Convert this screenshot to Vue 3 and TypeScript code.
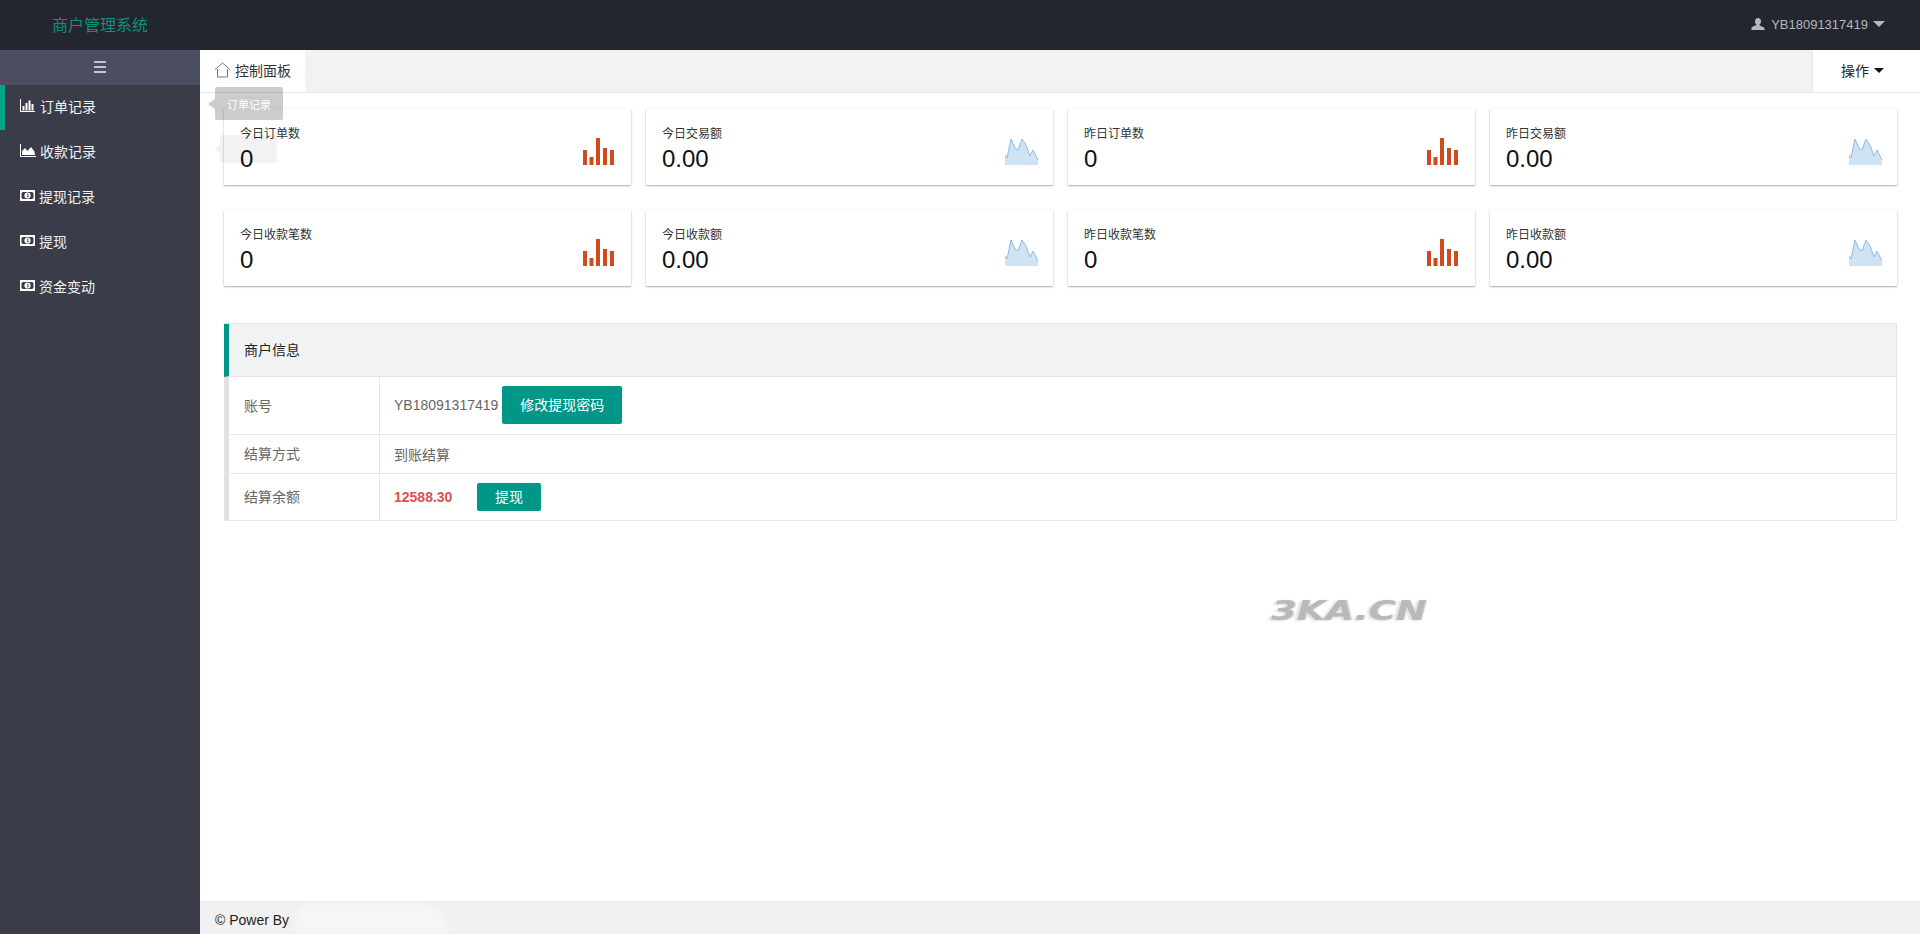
<script setup lang="ts">
const navItems = [
  { label: '订单记录', icon: 'bar', active: true },
  { label: '收款记录', icon: 'area', active: false },
  { label: '提现记录', icon: 'money', active: false },
  { label: '提现', icon: 'money', active: false },
  { label: '资金变动', icon: 'money', active: false },
]
const cards = [
  { title: '今日订单数', value: '0', chart: 'bar' },
  { title: '今日交易额', value: '0.00', chart: 'area' },
  { title: '昨日订单数', value: '0', chart: 'bar' },
  { title: '昨日交易额', value: '0.00', chart: 'area' },
  { title: '今日收款笔数', value: '0', chart: 'bar' },
  { title: '今日收款额', value: '0.00', chart: 'area' },
  { title: '昨日收款笔数', value: '0', chart: 'bar' },
  { title: '昨日收款额', value: '0.00', chart: 'area' },
]
</script>

<template>
  <div class="app">
    <header class="topbar">
      <div class="brand">商户管理系统</div>
      <div class="user">
        <svg class="user-icon" viewBox="0 0 14 14" width="14" height="14">
          <path d="M7 1c1.900 0 3 1.500 3 3.400 0 1.300-.6 2.500-1.400 3.100v1.100l4 1.700c.6.3.9.8.9 1.400V13H.5v-1.800c0-.6.3-1.100.9-1.400l4-1.700V7.500C4.600 6.900 4 5.700 4 4.400 4 2.500 5.100 1 7 1z" fill="#b4b7bd" />
        </svg>
        <span>YB18091317419</span>
        <i class="caret caret-user"></i>
      </div>
    </header>

    <div class="body">
      <aside class="sidebar">
        <div class="toggle">
          <span class="hamburger"><i></i><i></i><i></i></span>
        </div>
        <nav class="nav">
          <a v-for="item in navItems" :key="item.label" class="nav-item" :class="{ active: item.active }">
            <svg v-if="item.icon === 'bar'" class="nav-icon" viewBox="0 0 15 13" width="15" height="13">
              <path d="M0 0h1v12h14v1H0z" fill="#fff" />
              <path d="M2.500 7h2v4.500h-2zM5.500 4h2v7.500h-2zM8.500 1.500h2v10h-2zM11.500 5h2v6.500h-2z" fill="#fff" />
            </svg>
            <svg v-else-if="item.icon === 'area'" class="nav-icon nav-icon-area" viewBox="0 0 16 13" width="16" height="13">
              <path d="M0 0h1v12h15v1H0z" fill="#fff" />
              <path d="M2 11V7l3-3 2.500 3L11 3l3.500 4.500.5 3.500z" fill="#fff" />
            </svg>
            <svg v-else class="nav-icon" viewBox="0 0 15 11" width="15" height="11">
              <path fill-rule="evenodd" d="M0 0h15v11H0zM2.700 2 1.500 3.200v4.600L2.700 9h9.600l1.200-1.200V3.200L12.300 2zM7.500 2.400a3.100 3.100 0 1 1 0 6.200 3.100 3.100 0 0 1 0-6.200zM7 3.800v.7h.5v2H6.800v.7h1.700v-.7h-.1V3.800z" fill="#fff" />
            </svg>
            <span :class="{ 'nav-tight': item.icon === 'money' }">{{ item.label }}</span>
          </a>
        </nav>
      </aside>

      <main class="main">
        <div class="tabbar">
          <div class="tab">
            <svg viewBox="0 0 17 16" width="17" height="16">
              <path d="M1 7.500 8.500 1 16 7.500M3.500 7v8h10V7" fill="none" stroke="#777" stroke-width="1" />
            </svg>
            <span>控制面板</span>
          </div>
          <div class="actions">操作 <i class="caret caret-action"></i></div>
        </div>

        <div class="content">
          <section class="cards">
            <article v-for="card in cards" :key="card.title" class="card">
              <div class="card-text">
                <div class="card-title">{{ card.title }}</div>
                <div class="card-value">{{ card.value }}</div>
              </div>
              <svg v-if="card.chart === 'bar'" class="spark" viewBox="0 0 32 27" width="32" height="27">
                <path d="M0 12h4v15H0zM6.500 19h4v8h-4zM13 0h4v27h-4zM20 10h4v17h-4zM27 12h4v15h-4z" fill="#d1491f" />
              </svg>
              <svg v-else class="spark spark-area" viewBox="0 0 33 27" width="33" height="27">
                <path d="M0 17 2 20 6 1 10 10 13 12 17 1 21 7 25 18 28 12 33 22V27H0z" fill="#cfe3f5" />
                <path d="M0 17 2 20 6 1 10 10 13 12 17 1 21 7 25 18 28 12 33 22" fill="none" stroke="#8dbbe2" stroke-width="1" />
              </svg>
            </article>
          </section>

          <section class="panel">
            <h2 class="panel-heading">商户信息</h2>
            <div class="row row-account">
              <div class="label">账号</div>
              <div class="value">
                <span>YB18091317419</span>
                <button class="btn btn-pass">修改提现密码</button>
              </div>
            </div>
            <div class="row row-method">
              <div class="label">结算方式</div>
              <div class="value">到账结算</div>
            </div>
            <div class="row row-balance">
              <div class="label">结算余额</div>
              <div class="value">
                <b class="money">12588.30</b>
                <button class="btn btn-withdraw">提现</button>
              </div>
            </div>
          </section>
        </div>

        <footer class="footer">© Power By</footer>
      </main>
    </div>

    <div class="tip tip-main">订单记录</div>
    <div class="tip tip-ghost"></div>
    <div class="watermark">3KA.CN</div>
    <div class="footer-blot"></div>
  </div>
</template>

<style>
html, body { margin: 0; height: 100%; overflow: hidden; background: #fff; }
</style>

<style scoped>
.app {
  position: relative;
  display: flex;
  flex-direction: column;
  height: 934px;
  font-family: "Liberation Sans", "Noto Sans CJK SC", sans-serif;
  font-size: 14px;
  color: #333;
}
.topbar {
  flex: 0 0 50px;
  display: flex;
  align-items: center;
  justify-content: space-between;
  background: #23262f;
}
.brand {
  width: 200px;
  padding-bottom: 3px;
  text-align: center;
  font-size: 16px;
  color: #0f8f7c;
}
.user {
  display: flex;
  align-items: center;
  padding-right: 35px;
  padding-bottom: 2px;
  font-size: 13px;
  color: #b4b7bd;
}
.user-icon { margin-right: 6px; }
.caret {
  display: inline-block;
  width: 0;
  height: 0;
  border-left: 6px solid transparent;
  border-right: 6px solid transparent;
}
.caret-user { margin-left: 5px; border-top: 6px solid #b4b7bd; }
.caret-action {
  margin-left: 2px;
  border-left-width: 5px;
  border-right-width: 5px;
  border-top: 5px solid #111;
}
.body { flex: 1; display: flex; min-height: 0; }
.sidebar {
  flex: 0 0 200px;
  background: #3a3d49;
}
.toggle {
  height: 35px;
  display: flex;
  align-items: center;
  justify-content: center;
  background: #4a4e60;
}
.hamburger { display: flex; flex-direction: column; gap: 3px; width: 12px; padding-bottom: 1px; }
.hamburger i { height: 2px; background: #c3c5cc; }
.nav { display: flex; flex-direction: column; }
.nav-item {
  height: 45px;
  display: flex;
  align-items: center;
  gap: 5px;
  padding-left: 20px;
  padding-bottom: 4px;
  color: #f2f2f4;
  font-size: 14px;
  box-sizing: border-box;
}
.nav-item.active {
  box-shadow: inset 5px 0 0 #00a58c;
}
.nav-icon { flex: none; }
.nav-icon-area { margin-right: -1px; }
.nav-tight { margin-left: -1px; }
.main {
  flex: 1;
  min-width: 0;
  display: flex;
  flex-direction: column;
}
.tabbar {
  flex: 0 0 42px;
  display: flex;
  justify-content: space-between;
  background: #f2f2f2;
  border-bottom: 1px solid #e6e6e6;
  box-sizing: border-box;
}
.tab {
  width: 105px;
  height: 42px;
  display: flex;
  align-items: center;
  gap: 4px;
  padding-left: 14px;
  padding-bottom: 2px;
  box-sizing: border-box;
  background: #fff;
  color: #333;
  font-size: 14px;
}
.actions {
  width: 108px;
  display: flex;
  align-items: center;
  gap: 3px;
  padding-left: 28px;
  padding-bottom: 2px;
  background: #fff;
  border-left: 1px solid #e6e6e6;
  box-sizing: border-box;
  font-size: 14px;
  color: #222;
}
.content {
  flex: 1;
  padding: 16px 23px 0 24px;
}
.cards {
  display: grid;
  grid-template-columns: repeat(4, 1fr);
  gap: 25px 15px;
}
.card {
  height: 76px;
  display: flex;
  justify-content: space-between;
  align-items: flex-end;
  padding: 0 16px 21px 16px;
  box-sizing: border-box;
  background: #fff;
  box-shadow: 0 1px 2px rgba(0, 0, 0, .32), 0 0 3px rgba(0, 0, 0, .05);
  border-radius: 1px;
}
.card-text {
  align-self: flex-start;
  padding-top: 17px;
}
.card-title { font-size: 12px; line-height: 17px; color: #333; }
.card-value { font-size: 24px; line-height: 32px; color: #111; }
.spark { display: block; margin-bottom: -1px; }
.spark-area { margin-right: -1px; }
.panel {
  margin-top: 37px;
  border: 1px solid #e6e6e6;
  border-left: 0;
}
.panel-heading {
  margin: 0;
  height: 53px;
  display: flex;
  align-items: center;
  padding-left: 15px;
  padding-bottom: 2px;
  box-sizing: border-box;
  background: #f2f2f2;
  border-left: 5px solid #009688;
  border-bottom: 1px solid #e2e2e2;
  font-size: 14px;
  font-weight: 400;
  color: #222;
}
.row {
  display: flex;
  border-left: 5px solid #e2e2e2;
  box-sizing: border-box;
  color: #666;
  font-size: 14px;
}
.row + .row { border-top: 1px solid #e6e6e6; }
.row-account { height: 57px; }
.row-method { height: 39px; }
.row-balance { height: 47px; }
.label {
  flex: 0 0 151px;
  display: flex;
  align-items: center;
  padding-left: 15px;
  padding-bottom: 2px;
  box-sizing: border-box;
  border-right: 1px solid #e6e6e6;
}
.value {
  flex: 1;
  display: flex;
  align-items: center;
  padding-left: 14px;
  padding-bottom: 1px;
}
.btn {
  border: 0;
  border-radius: 2px;
  background: #009688;
  color: #fff;
  font-family: inherit;
  font-size: 14px;
  padding: 0 0 2px;
}
.btn-pass { width: 120px; height: 38px; margin-left: 4px; }
.btn-withdraw { width: 64px; height: 28px; margin-left: 25px; }
.money { width: 58px; color: #d9534f; font-size: 14px; font-weight: 700; white-space: nowrap; }
.footer {
  flex: 0 0 33px;
  display: flex;
  align-items: center;
  padding-left: 15px;
  padding-top: 3px;
  background: #f1f1f1;
  border-top: 1px solid #e6e6e6;
  box-sizing: border-box;
  font-size: 14px;
  color: #222;
}
.tip {
  position: absolute;
  color: #fff;
  border-radius: 2px;
  display: flex;
  align-items: center;
  justify-content: center;
  font-size: 11px;
}
.tip::before {
  content: "";
  position: absolute;
  right: 100%;
  top: 50%;
  margin-top: -5px;
  border-top: 5px solid transparent;
  border-bottom: 5px solid transparent;
}
.tip-main {
  left: 215px;
  top: 87px;
  width: 68px;
  height: 33px;
  background: rgba(0, 0, 0, .2);
}
.tip-main::before { border-right: 7px solid rgba(0, 0, 0, .2); }
.tip-ghost {
  left: 220px;
  top: 135px;
  width: 57px;
  height: 28px;
  background: rgba(0, 0, 0, .05);
}
.tip-ghost::before { border-right: 5px solid rgba(0, 0, 0, .05); }
.watermark {
  position: absolute;
  left: 1271px;
  top: 593px;
  font-family: "DejaVu Sans", sans-serif;
  font-size: 26px;
  font-weight: 700;
  font-style: italic;
  line-height: 36px;
  color: #b9b9b9;
  text-shadow: 1px 0 1px #d6d6d6, -2px 1px 2px #e2e2e2;
  transform: scaleX(1.420);
  transform-origin: left center;
}
.footer-blot {
  position: absolute;
  left: 295px;
  top: 903px;
  width: 155px;
  height: 31px;
  border-radius: 16px 30px 0 0;
  background: rgba(255, 255, 255, .35);
  filter: blur(3px);
}
</style>
